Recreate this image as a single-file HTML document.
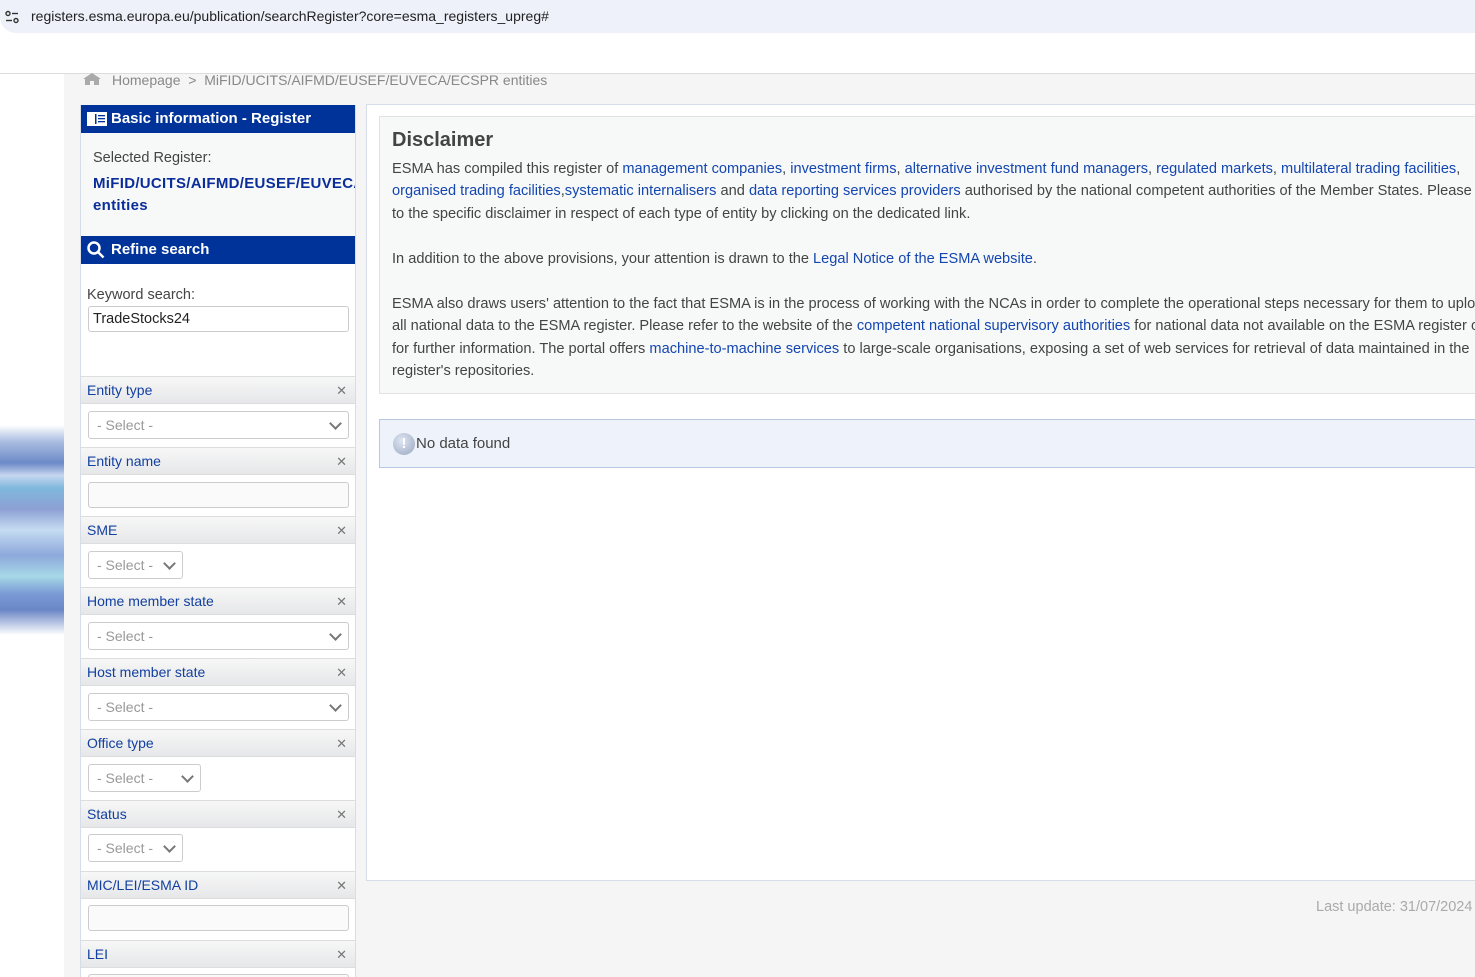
<!DOCTYPE html>
<html><head><meta charset="utf-8"><style>
*{box-sizing:border-box;margin:0;padding:0}
html,body{width:1475px;height:977px;overflow:hidden}
body{font-family:"Liberation Sans",sans-serif;background:#fff;position:relative;font-size:14px;color:#333}
.url{position:absolute;left:0;top:0;width:1475px;height:33px;background:#eef1f9;border-radius:0 0 0 16px}
.url span{position:absolute;left:31px;top:8px;font-size:14px;color:#222}
.hline{position:absolute;left:0;top:73px;width:1475px;height:1px;background:#ddd}
.page{position:absolute;left:64px;top:74px;right:0;bottom:0;background:#f5f5f5}
.stripe{position:absolute;left:0;top:425px;width:64px;height:210px;background:linear-gradient(#fff 0%,#a9bce0 8%,#6d8ac8 18%,#c6d6f0 24%,#7fb8dc 30%,#8da0d4 40%,#c5dcf2 50%,#8da8dc 62%,#a6d8e6 72%,#7c9cd6 80%,#6a86c6 88%,#fff 100%)}
.crumb{position:absolute;left:112px;top:72px;color:#888;font-size:14px}
.side{position:absolute;left:80px;top:105px;width:276px;height:872px;background:#fff;border-left:1px solid #d6dce8;border-right:1px solid #d6dce8;overflow:hidden}
.hd{height:28px;background:#003399;color:#fff;font-weight:bold;font-size:15px;line-height:28px;padding-left:30px;position:relative}
.sh{position:absolute;left:0;width:275px;height:28px;background:linear-gradient(#f7f7f7,#e6e7e9);border-top:1px solid #ddd;border-bottom:1px solid #ddd;color:#1240a0;font-size:14px;line-height:26px;padding-left:6px}
.sh b{position:absolute;right:9px;top:1px;color:#777;font-size:13px;font-weight:normal}
.sel{position:absolute;left:7px;height:28px;border:1px solid #ccc;border-radius:3px;background:#fff;color:#999;padding-left:8px;line-height:26px;font-size:14px}
.sel:after{content:"";position:absolute;right:8px;top:7px;width:7px;height:7px;border-right:2px solid #777;border-bottom:2px solid #777;transform:rotate(45deg)}
.inp{position:absolute;left:7px;width:261px;height:26px;border:1px solid #ccc;border-radius:3px;background:#fafafa}
.main{position:absolute;left:366px;top:104px;width:1120px;height:777px;background:#fff;border:1px solid #d6dce8}
.disc{position:absolute;left:379px;top:116px;width:1110px;height:278px;background:#f7f8f8;border:1px solid #e2e2e2;padding:12px 12px;font-size:14.6px;line-height:22.5px;color:#444;white-space:nowrap;overflow:hidden}
.disc h2{font-size:20px;color:#444;margin-bottom:6px}
a{color:#1446b0;text-decoration:none}
.nd{position:absolute;left:379px;top:419px;width:1110px;height:49px;background:#eef2fa;border:1px solid #b8c8e0;font-size:15px;line-height:47px;padding-left:36px;color:#444}
.ic{position:absolute;left:13px;top:13px;width:22px;height:22px;border-radius:50%;background:radial-gradient(circle at 40% 35%,#dfe6f2,#98a6c0);color:#fff;font-weight:bold;text-align:center;line-height:22px;font-size:15px}
</style></head><body>
<div class="url"><svg style="position:absolute;left:4px;top:9px" width="16" height="16" viewBox="0 0 16 16" fill="none" stroke="#333" stroke-width="1.4"><circle cx="4" cy="4.5" r="2"/><line x1="8" y1="4.5" x2="14" y2="4.5"/><line x1="2" y1="11.5" x2="8" y2="11.5"/><circle cx="12" cy="11.5" r="2"/></svg><span>registers.esma.europa.eu/publication/searchRegister?core=esma_registers_upreg#</span></div>
<div class="hline"></div>
<div class="page"></div>
<div class="stripe"></div>
<svg style="position:absolute;left:82px;top:72px" width="20" height="14" viewBox="0 0 20 14"><path d="M1 7 L10 1 L19 7 L17 7 L17 13 L12 13 L12 9 L8 9 L8 13 L3 13 L3 7Z" fill="#aaa"/></svg>
<div class="crumb">Homepage &nbsp;&gt;&nbsp; MiFID/UCITS/AIFMD/EUSEF/EUVECA/ECSPR entities</div>
<div class="side">
<div class="hd"><svg style="position:absolute;left:6px;top:7px" width="20" height="14" viewBox="0 0 20 14"><rect x="0" y="0" width="20" height="14" fill="#fff"/><rect x="8" y="2" width="1.5" height="10" fill="#003399"/><rect x="11" y="3" width="7" height="1.3" fill="#003399"/><rect x="11" y="6" width="7" height="1.3" fill="#003399"/><rect x="11" y="9" width="7" height="1.3" fill="#003399"/></svg>Basic information - Register</div>
<div style="height:103px;background:#f7f8f8;padding:17px 12px;overflow:hidden;white-space:nowrap">
<div style="color:#444;font-size:14.5px">Selected Register:</div>
<div style="color:#0a2d9a;font-weight:bold;font-size:15px;line-height:22px;margin-top:7px;letter-spacing:.3px">MiFID/UCITS/AIFMD/EUSEF/EUVECA<br>entities</div></div>
<div class="hd"><svg style="position:absolute;left:6px;top:5px" width="18" height="18" viewBox="0 0 18 18" fill="none" stroke="#fff" stroke-width="2.5"><circle cx="7" cy="7" r="5.5"/><line x1="11" y1="11" x2="16.5" y2="16.5"/></svg>Refine search</div>
<div style="position:absolute;left:6px;top:182px;color:#444;font-size:14.5px">Keyword search:</div>
<div class="inp" style="top:201px;background:#fff;color:#222;padding-left:4px;line-height:24px;font-size:14.5px">TradeStocks24</div>
<div class="sh" style="top:271px">Entity type<b>✕</b></div>
<div class="sel" style="top:306px;width:261px">- Select -</div>
<div class="sh" style="top:342px">Entity name<b>✕</b></div>
<div class="inp" style="top:377px"></div>
<div class="sh" style="top:411px">SME<b>✕</b></div>
<div class="sel" style="top:446px;width:95px">- Select -</div>
<div class="sh" style="top:482px">Home member state<b>✕</b></div>
<div class="sel" style="top:517px;width:261px">- Select -</div>
<div class="sh" style="top:553px">Host member state<b>✕</b></div>
<div class="sel" style="top:588px;width:261px">- Select -</div>
<div class="sh" style="top:624px">Office type<b>✕</b></div>
<div class="sel" style="top:659px;width:113px">- Select -</div>
<div class="sh" style="top:695px">Status<b>✕</b></div>
<div class="sel" style="top:729px;width:95px">- Select -</div>
<div class="sh" style="top:766px">MIC/LEI/ESMA ID<b>✕</b></div>
<div class="inp" style="top:800px"></div>
<div class="sh" style="top:835px">LEI<b>✕</b></div>
<div class="inp" style="top:869px"></div>
</div>
<div class="main"></div>
<div class="disc"><h2>Disclaimer</h2>
ESMA has compiled this register of <a>management companies</a>, <a>investment firms</a>, <a>alternative investment fund managers</a>, <a>regulated markets</a>, <a>multilateral trading facilities</a>,<br>
<a>organised trading facilities</a>,<a>systematic internalisers</a> and <a>data reporting services providers</a> authorised by the national competent authorities of the Member States. Please refer<br>
to the specific disclaimer in respect of each type of entity by clicking on the dedicated link.<br><br>
In addition to the above provisions, your attention is drawn to the <a>Legal Notice of the ESMA website</a>.<br><br>
ESMA also draws users' attention to the fact that ESMA is in the process of working with the NCAs in order to complete the operational steps necessary for them to upload<br>
all national data to the ESMA register. Please refer to the website of the <a>competent national supervisory authorities</a> for national data not available on the ESMA register or<br>
for further information. The portal offers <a>machine-to-machine services</a> to large-scale organisations, exposing a set of web services for retrieval of data maintained in the<br>
register's repositories.</div>
<div class="nd"><div class="ic">!</div>No data found</div>
<div style="position:absolute;left:1316px;top:899px;color:#aaa;font-size:14.5px;white-space:nowrap">Last update: 31/07/2024</div>
</body></html>
